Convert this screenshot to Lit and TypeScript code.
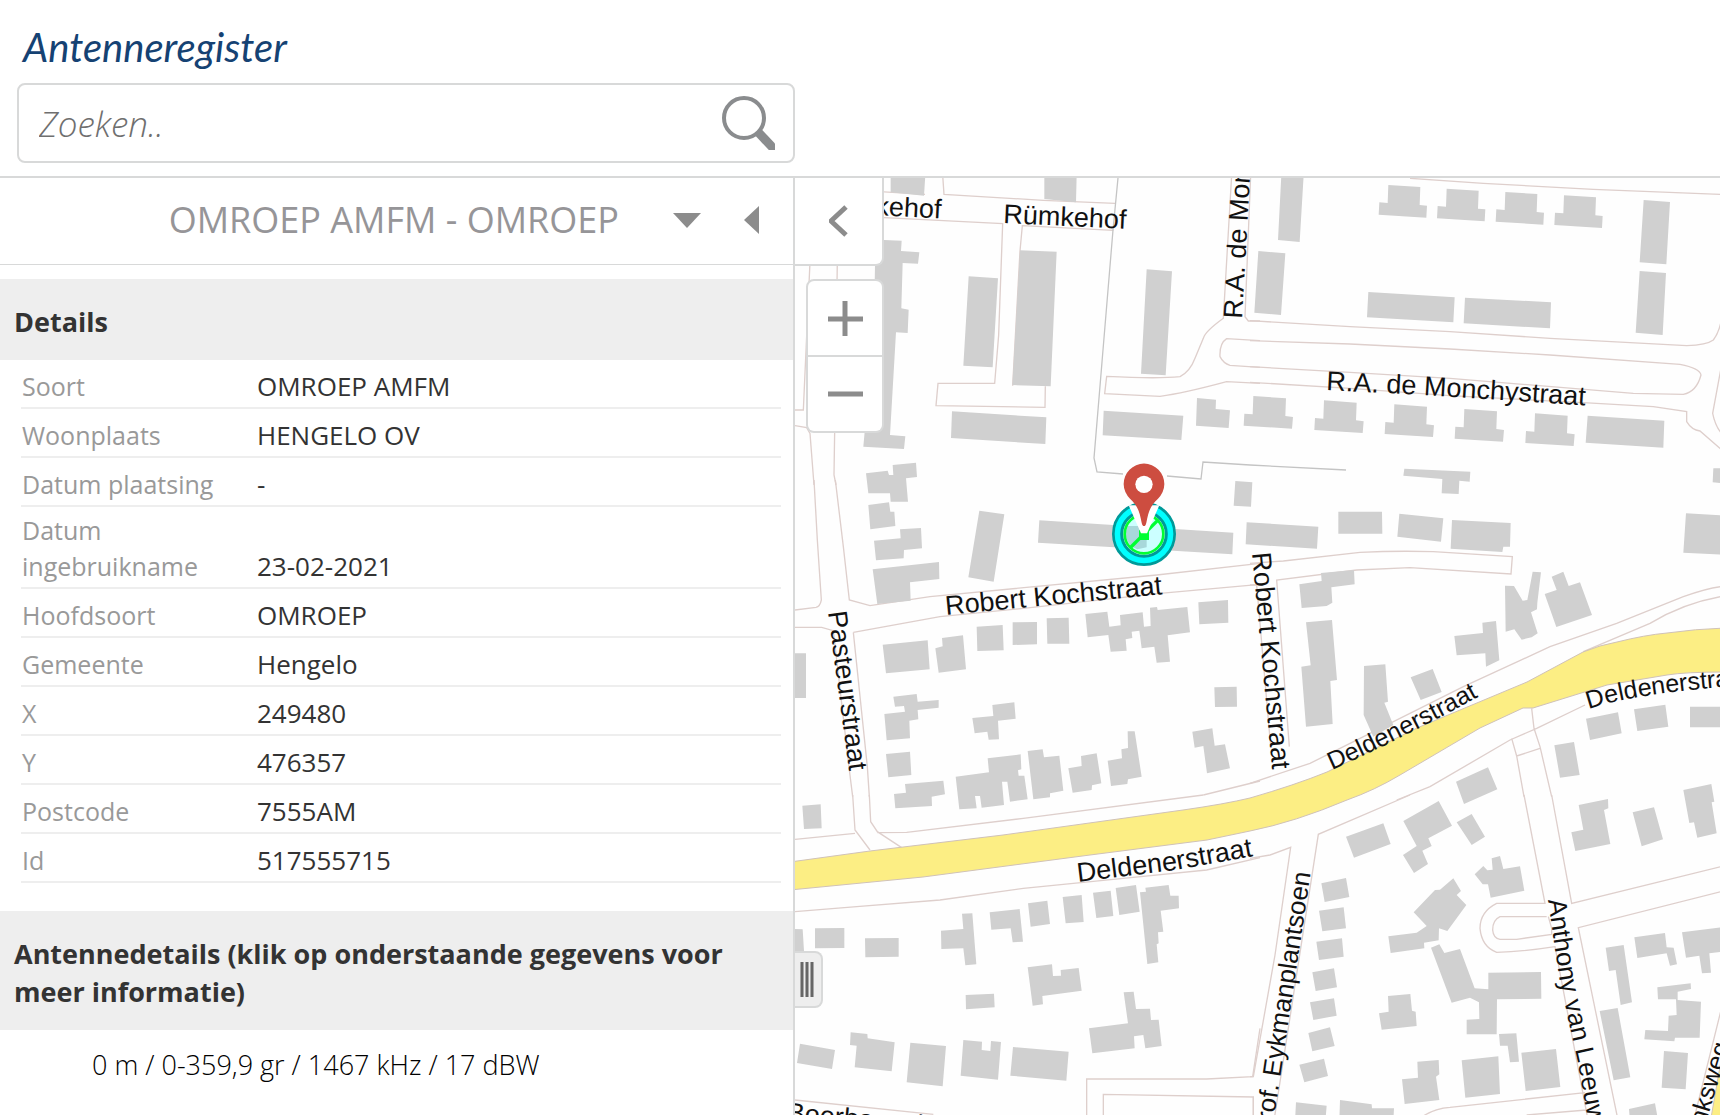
import { LitElement, html, svg, css } from "lit";
import { customElement, property } from "lit/decorators.js";

interface Tile {
  x: number;
  y: number;
  buildings: string[];
  roads: string;
}

interface Label {
  id: string;
  d: string;
  text: string;
  size?: "small" | "medium";
}

const DETAILS: [string, string][] = [
  ["Soort", "OMROEP AMFM"],
  ["Woonplaats", "HENGELO OV"],
  ["Datum plaatsing", "-"],
  ["Datum ingebruikname", "23-02-2021"],
  ["Hoofdsoort", "OMROEP"],
  ["Gemeente", "Hengelo"],
  ["X", "249480"],
  ["Y", "476357"],
  ["Postcode", "7555AM"],
  ["Id", "517555715"],
];

/* Moves a "x,y x,y" outline by a fixed step, for rows of identical houses. */
const shift = (points: string, dx: number, dy: number): string =>
  points
    .split(" ")
    .map((p) => {
      const [x, y] = p.split(",").map(Number);
      return `${x + dx},${y + dy}`;
    })
    .join(" ");

const NORTH_HOUSE = "415,30 511,36 509,90 531,92 529,128 386,119 388,82 413,84";
const SOUTH_HOUSE = "222,676 320,683 318,736 341,739 338,774 193,765 195,729 220,731";

/* Map tiles: geometry is stored at three units per pixel. */
const TILES: Tile[] = [
  {
    x: -5,
    y: -3,
    buildings: [
      "302,0 406,0 402,62 302,52",
      "763,0 860,0 858,82 763,72",
      "282,195 335,197 333,228 388,232 384,266 338,264 334,400 356,404 353,474 318,472 300,780 346,784 342,822 220,815 224,770 250,560 255,270 262,195",
      "536,304 624,310 608,577 520,572",
      "690,226 800,230 782,634 667,630",
      "1070,283 1146,289 1127,601 1053,596",
      "486,709 769,727 766,807 483,789",
      "941,707 1180,722 1174,795 938,781",
      "1221,669 1278,674 1277,702 1320,706 1316,759 1218,752",
      "228,895 293,887 297,900 310,900 308,870 378,863 381,906 348,910 354,980 302,980 300,955 235,955",
    ],
    roads:
      "M458 0L462 58L760 76L975 85M270 50L405 58M282 128L638 146L626 480L614 625H444L438 692L765 697L766 634M970 166L697 152L690 228L668 632M60 260L40 705H15M142 260L132 900L138 930M15 752L50 758L60 775L72 930" +
      "M1325 0L1300 430Q1245 470 1240 490L1215 550Q1200 590 1170 605Q1100 612 950 604L944 656L1110 664Q1180 655 1310 620L1410 625M1382 0L1365 425L1375 438H1410M1410 497L1310 491Q1288 505 1290 545Q1300 565 1320 571L1410 577",
  },
  {
    x: 455,
    y: -3,
    buildings: [
      "94,0 161,0 149,201 84,195",
      "25,228 106,235 93,420 13,413",
      NORTH_HOUSE,
      shift(NORTH_HOUSE, 175, 11),
      shift(NORTH_HOUSE, 351, 21),
      shift(NORTH_HOUSE, 527, 31),
      "1181,75 1260,81 1249,268 1169,262",
      "1169,288 1248,294 1238,480 1157,473",
      "355,351 614,367 610,442 351,427",
      "645,368 903,382 900,460 641,445",
      shift(SOUTH_HOUSE, -212, -13),
      SOUTH_HOUSE,
      shift(SOUTH_HOUSE, 211, 12),
      shift(SOUTH_HOUSE, 421, 26),
      shift(SOUTH_HOUSE, 633, 39),
      "1013,722 1243,737 1240,818 1007,803",
      "463,881 661,890 659,920 628,917 626,957 575,955 577,912 460,902",
      "1390,880 1420,880 1420,925 1388,922",
    ],
    roads:
      "M0 437L300 455L600 470L900 490L1310 512Q1370 510 1390 495Q1405 475 1412 445M0 497L300 507L600 522L900 540L1290 568Q1350 580 1353 600Q1340 650 1300 658L1150 655L600 610L300 592L0 575" +
      "M0 622L300 640L600 662L1000 683L1210 695L1310 710V740Q1325 765 1350 768L1412 822M1412 585L1388 715Q1395 750 1412 772M480 10L700 25L1030 43L1412 58",
  },
  {
    x: -5,
    y: 302,
    buildings: [
      "1336,3 1387,7 1383,80 1331,77",
      "235,75 297,67 301,95 313,95 316,138 241,148",
      "330,148 393,144 396,205 342,210 341,235 258,241 252,182 332,175",
      "248,268 447,246 448,297 360,307 362,362 262,372",
      "568,92 643,103 611,305 535,292",
      "748,121 1330,158 1327,223 744,188",
      "1370,127 1585,140 1581,206 1367,193",
      "560,440 638,435 641,511 562,513",
      "668,427 741,426 741,493 668,495",
      "770,415 836,413 838,491 772,491",
      "886,402 952,395 958,440 992,436 990,405 1058,397 1062,440 1082,438 1080,383 1101,381 1103,390 1192,381 1200,457 1133,466 1140,545 1100,548 1093,500 1055,505 1048,452 1025,455 1027,474 1007,478 1010,512 962,515 955,465 893,472",
      "1225,367 1314,360 1315,428 1228,433",
      "278,494 413,481 419,568 288,580",
      "436,505 458,499 456,474 519,466 528,568 446,578",
      "15,520 48,520 48,654 15,654",
      "310,650 380,642 383,665 446,660 446,683 383,690 385,718 358,722 360,775 290,781 283,702 345,695 342,678 315,680",
      "607,675 673,667 677,716 624,722 627,778 596,779 592,755 554,760 547,714 610,708",
      "1273,622 1340,620 1341,680 1275,681",
      "288,822 360,815 364,885 295,892",
      "1207,755 1267,745 1274,797 1305,793 1320,865 1251,880 1240,798 1214,803",
      "497,890 597,877 593,835 692,823 694,868 684,871 686,887 703,887 713,958 660,965 652,905 636,905 642,975 575,983 570,948 555,948 560,985 508,988",
      "713,813 758,808 762,832 808,827 820,932 780,940 780,952 730,958",
      "835,865 875,858 873,828 920,820 934,910 906,916 905,930 848,938",
      "953,842 996,835 994,808 1014,804 1013,754 1034,754 1055,890 1014,898 1012,912 963,918",
      "345,912 460,902 465,943 425,950 426,978 316,985 312,942 348,938",
    ],
    roads:
      "M72 0L82 180L94 360Q90 380 78 382L15 390M136 0L160 200L178 360L240 377L420 350L1100 285L1410 250M15 442H95L130 452L178 870L188 950M190 457L232 860L238 950M190 457L450 410L700 385L1110 340L1410 313M1410 903L1240 945",
  },
  {
    x: 455,
    y: 302,
    buildings: [
      "265,95 396,95 397,161 265,161",
      "448,101 580,115 573,185 442,170",
      "606,120 782,129 780,200 760,200 757,216 602,206",
      "1308,100 1420,106 1420,224 1300,218",
      "148,313 215,303 213,279 312,270 314,313 244,322 247,368 230,378 155,384",
      "168,427 246,420 261,600 241,603 248,732 168,740 154,560 182,556",
      "342,558 406,553 414,665 403,668 430,735 370,770 341,705",
      "482,592 548,567 575,636 512,660",
      "613,468 699,459 697,428 738,423 748,541 708,560 706,520 620,526",
      "765,317 792,318 818,362 832,360 848,275 873,277 862,368 861,388 843,397 863,460 845,472 815,479 793,448 767,455",
      "905,290 940,275 956,318 990,307 1026,405 919,441 884,342 920,330",
      "1008,716 1104,697 1115,760 1020,780",
      "1152,688 1246,674 1255,740 1162,753",
      "1320,680 1420,680 1420,742 1320,742",
      "913,796 972,786 989,885 930,893",
      "618,905 714,862 742,928 642,972",
      "1300,930 1384,912 1393,965 1385,967 1400,1060 1342,1073 1332,1027 1318,1029",
    ],
    roads:
      "M0 250L100 243L330 217Q440 212 550 215L787 230L783 282L480 263L320 270L80 300L118 800M20 315L62 800M0 315H20M0 910L180 850L330 775L640 620L900 500L1100 430L1300 350Q1370 325 1412 320M1412 350Q1300 370 1200 430L1000 515" +
      "M440 960L540 920L780 780L860 745L1005 675M845 685L852 745L870 800L905 950M785 775L800 828L822 950M800 828L870 805",
  },
  {
    x: -5,
    y: 617,
    buildings: [
      "37,32 92,28 95,100 42,102",
      "75,400 163,399 163,459 75,460",
      "15,402 38,403 42,468 15,468",
      "225,430 326,429 326,485 226,487",
      "453,407 520,402 516,356 547,355 559,508 526,511 520,460 454,462",
      "599,352 689,342 699,440 668,442 662,400 604,404",
      "714,325 772,317 780,387 722,395",
      "818,306 875,300 881,381 827,385",
      "909,293 962,287 970,363 919,369",
      "977,279 1038,270 1049,350 988,360",
      "1050,292 1068,290 1066,278 1136,270 1141,302 1166,302 1167,340 1112,347 1120,410 1104,412 1106,445 1100,448 1105,502 1072,507",
      "713,517 786,508 789,543 813,542 812,525 866,519 875,587 757,603 759,628 728,632",
      "527,600 612,596 614,637 528,643",
      "1001,592 1031,590 1038,642 1080,641 1083,675 1106,674 1115,753 1066,760 1060,720 1032,724 1034,760 907,775 897,700 1014,685",
      "30,746 135,765 126,822 21,804",
      "182,712 232,717 233,730 314,742 305,829 194,817 200,752 180,750",
      "361,743 468,753 458,874 350,862",
      "520,735 576,740 575,765 601,768 603,738 633,741 624,854 512,842",
      "669,756 836,770 829,857 661,842",
    ],
    roads:
      "M188 0L195 105L240 165M238 0L242 80L262 110L335 158M262 113L350 112L700 70L1240 0M15 133L195 115M15 350L200 335L450 315L700 280L1000 250L1250 225L1410 188M890 980V852H1250L1388 845L1410 700M940 980V898L1390 906V980M15 915L430 958",
  },
  {
    x: 455,
    y: 617,
    buildings: [
      "288,125 400,85 422,147 312,188",
      "460,78 566,18 606,92 535,130 545,153 517,167 534,207 492,234 459,180 500,153",
      "620,82 665,57 705,125 665,150",
      "986,30 1074,12 1075,40 1062,45 1081,147 976,168 964,112 1000,104",
      "1148,52 1212,37 1239,133 1175,154",
      "674,238 700,213 712,226 728,224 725,190 750,183 760,222 810,214 823,287 722,308 714,268 698,268",
      "491,352 555,285 570,284 610,250 633,288 620,300 649,330 592,408 567,400 566,436 522,443 523,460 422,474 415,424 500,413 530,393",
      "214,265 288,249 298,306 224,321",
      "207,347 281,337 288,400 217,409",
      "199,440 276,430 281,485 207,495",
      "187,532 252,520 261,577 197,588",
      "180,622 252,610 260,662 190,675",
      "175,714 240,697 254,753 187,769",
      "148,809 222,791 234,843 163,862",
      "543,458 568,448 583,474 630,462 674,580 715,583 715,533 873,531 874,611 741,613 740,718 650,718 650,674 688,672 687,622 660,608 605,623",
      "414,603 481,597 486,647 497,650 500,693 395,704 387,655 416,650",
      "747,717 799,715 807,800 780,802 773,752 750,752",
      "814,773 918,762 931,876 827,888",
      "635,796 745,784 750,897 646,908",
      "502,800 566,795 568,838 558,845 568,915 464,927 456,853 504,848",
      "138,922 230,932 226,980 135,980",
      "270,915 365,928 366,940 432,940 430,980 268,980",
      "1067,458 1121,450 1146,622 1112,630 1097,525 1077,528",
      "1153,427 1245,414 1250,457 1271,458 1281,508 1260,512 1250,475 1162,489",
      "1296,412 1420,396 1420,470 1378,475 1383,533 1356,535 1348,482 1308,488",
      "1222,577 1322,565 1323,582 1283,590 1283,615 1353,620 1349,728 1275,728 1273,739 1183,733 1186,705 1254,708 1256,662 1280,660 1278,613 1224,613",
      "1049,648 1103,639 1141,847 1091,856",
      "1242,768 1314,774 1307,883 1235,878",
      "1137,942 1215,925 1225,980 1140,980",
    ],
    roads:
      "M0 190L60 180L122 157L75 480L10 845H0M70 990L205 118L480 0M10 905V980M822 0L885 325H740Q690 350 690 400Q695 455 740 472Q820 470 915 455L1015 980M905 0L965 325L1412 215M890 365H750Q728 375 728 405Q730 430 750 433H800L905 418V400L895 365" +
      "M1412 290L985 398L1105 980M510 970Q550 940 600 937L1005 893M830 960L1010 945M1412 650L1330 980",
  },
];

const LABELS: Label[] = [
  { id: "l1", d: "M208 45L335 51", text: "Rümkehof" },
  { id: "l2", d: "M23 34L155 41", text: "Rümkehof" },
  { id: "l3", d: "M447 141L455 0L467 -160", text: "R.A. de Monchystraat" },
  { id: "l4", d: "M531 212L628 217L800 228", text: "R.A. de Monchystraat" },
  { id: "l5", d: "M151 437L370 416", text: "Robert Kochstraat" },
  { id: "l6", d: "M33 434L55 600", text: "Pasteurstraat" },
  { id: "l7", d: "M457 375L478 600", text: "Robert Kochstraat" },
  { id: "l8", d: "M537 592Q613 558 690 515", text: "Deldenerstraat", size: "small" },
  { id: "l9", d: "M794 531Q850 511 1010 504", text: "Deldenerstraat", size: "small" },
  { id: "l10", d: "M283 704L380 692L470 676", text: "Deldenerstraat" },
  { id: "l11", d: "M476 961L518 680L521 640", text: "Prof. Eykmanplantsoen", size: "medium" },
  { id: "l12", d: "M753 722L765 805L783 885L805 1010", text: "Anthony van Leeuw", size: "medium" },
  { id: "l13", d: "M-9 943L200 963", text: "Boerhaavelaan" },
  { id: "l14", d: "M910 948L945 832", text: "nksweg", size: "small" },
];

@customElement("register-map")
export class RegisterMap extends LitElement {
  static styles = css`
    :host {
      display: block;
      position: relative;
      overflow: hidden;
      background: #fefefe;
    }
    .canvas {
      position: absolute;
      inset: 0;
      width: 100%;
      height: 100%;
    }
    .building {
      fill: #d0d0d0;
    }
    .road {
      fill: none;
      stroke: #decfcc;
      stroke-width: 4;
    }
    .path {
      fill: none;
      stroke: #c4c4c4;
      stroke-width: 1.3;
    }
    .main-road {
      fill: #fcee84;
      stroke: #d0c2b8;
      stroke-width: 1;
    }
    .label {
      font-family: "Liberation Sans", Arial, sans-serif;
      font-size: 27px;
      fill: #111;
    }
    .label.small {
      font-size: 25px;
    }
    .label.medium {
      font-size: 26px;
    }
    button {
      display: flex;
      align-items: center;
      justify-content: center;
      box-sizing: border-box;
      margin: 0;
      padding: 0;
      border: 0;
      background: #fff;
      cursor: pointer;
    }
    .collapse {
      position: absolute;
      top: 0;
      left: 0;
      width: 89px;
      height: 88px;
      border: solid #d8d9d9;
      border-width: 0 2px 2px 0;
      border-bottom-right-radius: 8px;
    }
    .zoom {
      position: absolute;
      top: 101px;
      left: 11px;
      display: flex;
      flex-direction: column;
      gap: 2px;
      width: 74px;
      border: 2px solid #d8d9d9;
      border-radius: 8px;
      background: #d8d9d9;
      overflow: hidden;
    }
    .zoom button {
      height: 74px;
    }
    .handle {
      position: absolute;
      top: 773px;
      left: 0;
      gap: 1px;
      width: 28px;
      height: 57px;
      padding-right: 2px;
      border: solid #d8d9d9;
      border-width: 2px 2px 2px 0;
      border-radius: 0 8px 8px 0;
      background: #eee;
    }
    .bar {
      width: 2px;
      height: 35px;
      border: solid #a8a8a8;
      border-width: 0 1px;
      background: #666;
    }
  `;

  private renderMarker() {
    return svg`
      <g transform="translate(349 356) scale(.33333)">
        <circle r="92" fill="#0ff" stroke="#009999" stroke-width="8"></circle>
        <circle r="67" fill="#ccffff" stroke="#009999" stroke-width="9"></circle>
        <path d="M-52 -24H0V12H8V40L-20 46L-40 36L-56 10Z" fill="#a8d8da"></path>
        <circle r="58" fill="none" stroke="#00ff33" stroke-width="8"></circle>
        <path d="M-42 42L44 -44" stroke="#00ff33" stroke-width="10"></path>
        <rect x="-15" y="-12" width="30" height="30" fill="#00ff33"></rect>
        <path d="M-46 -86L-9 -2H9L46 -86Z" fill="#fff"></path>
        <path d="M0 -24Q-5 -24 -7 -34C-14 -70 -20 -86 -42 -106A61 61 0 1 1 42 -106C20 -86 14 -70 7 -34Q5 -24 0 -24Z" fill="#cd4d40"></path>
        <circle cy="-149" r="26" fill="#fff"></circle>
      </g>`;
  }

  render() {
    return html`
      <svg class="canvas" role="img" aria-label="Kaart van Hengelo">
        ${TILES.map(
          (t) => svg`<g transform="translate(${t.x} ${t.y}) scale(.33333)">
            <path class="road" d=${t.roads}></path>
            <path class="building" d=${t.buildings.map((b) => `M${b}Z`).join("")}></path>
          </g>`
        )}
        <path class="path" d="M323 0L318 52L307 184L299 280L302 294L328 296M372 298L406 301L408 284L455 287L551 292"></path>
        <path
          class="main-road"
          d="M-5 684L75 673L208 657L388 632Q430 626 455 620Q500 607 532 594L622 550L732 504L788 474Q805 467 822 464Q850 457 872 455Q900 451 930 450V494Q890 494 872 497L812 507L738 530H728L685 550L605 597Q580 612 552 622Q500 644 455 653L412 662L295 677L128 699L-5 712Z"
        ></path>
        <path class="main-road" d="M930 860L916 940H930Z"></path>
        ${LABELS.map(
          (l) => svg`<path id=${l.id} d=${l.d} fill="none"></path>
            <text class="label ${l.size ?? ""}"><textPath href="#${l.id}">${l.text}</textPath></text>`
        )}
        ${this.renderMarker()}
      </svg>
      <button class="collapse" aria-label="Paneel verbergen">
        <svg width="20" height="32" viewBox="0 0 20 32" fill="none" stroke="#8c8c8c" stroke-width="5">
          <path d="M17 2L2 16L17 30"></path>
        </svg>
      </button>
      <div class="zoom">
        <button aria-label="Inzoomen">
          <svg width="36" height="36" viewBox="0 0 36 36" stroke="#8c8c8c" stroke-width="5">
            <path d="M1 19H36M18 1V37"></path>
          </svg>
        </button>
        <button aria-label="Uitzoomen">
          <svg width="36" height="36" viewBox="0 0 36 36" stroke="#8c8c8c" stroke-width="5">
            <path d="M1 18H36"></path>
          </svg>
        </button>
      </div>
      <button class="handle" aria-label="Paneelbreedte aanpassen">
        <span class="bar"></span><span class="bar"></span><span class="bar"></span>
      </button>
    `;
  }
}

@customElement("detail-panel")
export class DetailPanel extends LitElement {
  @property() heading = "";
  @property({ attribute: false }) rows: [string, string][] = [];

  static styles = css`
    :host {
      display: block;
      border-right: 2px solid #d8d9d9;
      overflow: hidden;
    }
    button {
      margin: 0;
      padding: 0;
      border: 0;
      background: none;
      font: inherit;
      cursor: pointer;
    }
    svg {
      display: block;
    }
    .bar {
      display: flex;
      align-items: center;
      justify-content: flex-end;
      box-sizing: border-box;
      height: 87px;
      padding: 0 34px 3px 0;
      border-bottom: 1px solid #d8d9d9;
      margin-bottom: 14px;
    }
    .title {
      margin: 0 54px 0 0;
      font-size: 36px;
      font-weight: 400;
      line-height: 48px;
      color: #969598;
      white-space: nowrap;
    }
    .menu {
      margin-right: 43px;
    }
    .section {
      margin: 0;
      padding: 24px 14px 19px;
      background: #eee;
      color: #333;
      font-size: 27px;
      font-weight: 700;
      line-height: 38px;
    }
    .facts {
      width: calc(100% - 33px);
      margin: 0 12px 28px 21px;
      border-spacing: 0;
      table-layout: fixed;
      font-size: 26px;
      line-height: 36px;
    }
    .facts th,
    .facts td {
      box-sizing: border-box;
      height: 49px;
      padding: 5px 0 3px;
      border-bottom: 2px solid #eee;
      text-align: left;
      vertical-align: bottom;
      font-weight: 400;
      color: #333;
    }
    .facts th {
      width: 236px;
      padding-right: 36px;
      padding-left: 1px;
      color: #999;
      font-size: 25px;
    }
    .antenna {
      display: block;
      margin: 15px 0 0 92px;
      color: #000;
      font-size: 27px;
      font-weight: 300;
      line-height: 40px;
    }
  `;

  render() {
    return html`
      <div class="bar">
        <h1 class="title">${this.heading}</h1>
        <button class="menu" aria-label="Kies antenne">
          <svg width="28" height="16" viewBox="0 0 28 16"><path d="M0 1H28L14 16Z" fill="#8c8c8c"></path></svg>
        </button>
        <button aria-label="Terug">
          <svg width="15" height="28" viewBox="0 0 15 28"><path d="M15 0V28L0 14Z" fill="#8c8c8c"></path></svg>
        </button>
      </div>
      <h2 class="section">Details</h2>
      <table class="facts">
        ${this.rows.map(([k, v]) => html`<tr><th scope="row">${k}</th><td>${v}</td></tr>`)}
      </table>
      <h2 class="section">Antennedetails (klik op onderstaande gegevens voor meer informatie)</h2>
      <button class="antenna">0 m / 0-359,9 gr / 1467 kHz / 17 dBW</button>
    `;
  }
}

@customElement("app-root")
export class AppRoot extends LitElement {
  static styles = css`
    :host {
      display: flex;
      flex-direction: column;
      height: 100vh;
      overflow: hidden;
      background: #fff;
      font-family: "Open Sans", "Noto Sans", sans-serif;
    }
    .header {
      display: flex;
      flex-direction: column;
      padding: 14px 17px 13px;
      border-bottom: 2px solid #d8d9d9;
    }
    .logo {
      align-self: flex-start;
      margin: 0 0 3px 6px;
      color: #154273;
      font-family: Lato, "Open Sans", sans-serif;
      font-size: 40px;
      font-style: italic;
      line-height: 66px;
      text-decoration: none;
    }
    .search {
      display: flex;
      align-items: center;
      box-sizing: border-box;
      width: 100%;
      max-width: 778px;
      height: 80px;
      padding: 0 18px 0 20px;
      border: 2px solid #d8d9d9;
      border-radius: 8px;
    }
    .query {
      flex: 1;
      min-width: 0;
      padding: 2px 0 0;
      border: 0;
      outline: 0;
      background: none;
      color: #333;
      font: italic 300 35px/48px "Open Sans", "Noto Sans", sans-serif;
    }
    .query::placeholder {
      color: #6f6f6f;
      opacity: 1;
    }
    .go {
      margin: 0;
      padding: 0;
      border: 0;
      background: none;
      cursor: pointer;
    }
    .go svg {
      display: block;
    }
    .body {
      flex: 1;
      min-height: 0;
      display: grid;
      grid-template-columns: minmax(360px, 795px) minmax(45%, 1fr);
    }
  `;

  render() {
    return html`
      <header class="header">
        <a class="logo" href="#">Antenneregister</a>
        <form class="search" role="search">
          <input class="query" type="text" aria-label="Zoeken" placeholder="Zoeken.." />
          <button class="go" type="button" aria-label="Zoek">
            <svg width="54" height="54" viewBox="0 0 54 54" fill="none" stroke="#8a8c8e">
              <circle cx="23" cy="22" r="20" stroke-width="4"></circle>
              <path d="M37 36L54 54" stroke-width="9"></path>
            </svg>
          </button>
        </form>
      </header>
      <main class="body">
        <detail-panel heading="OMROEP AMFM - OMROEP" .rows=${DETAILS}></detail-panel>
        <register-map></register-map>
      </main>
    `;
  }
}
